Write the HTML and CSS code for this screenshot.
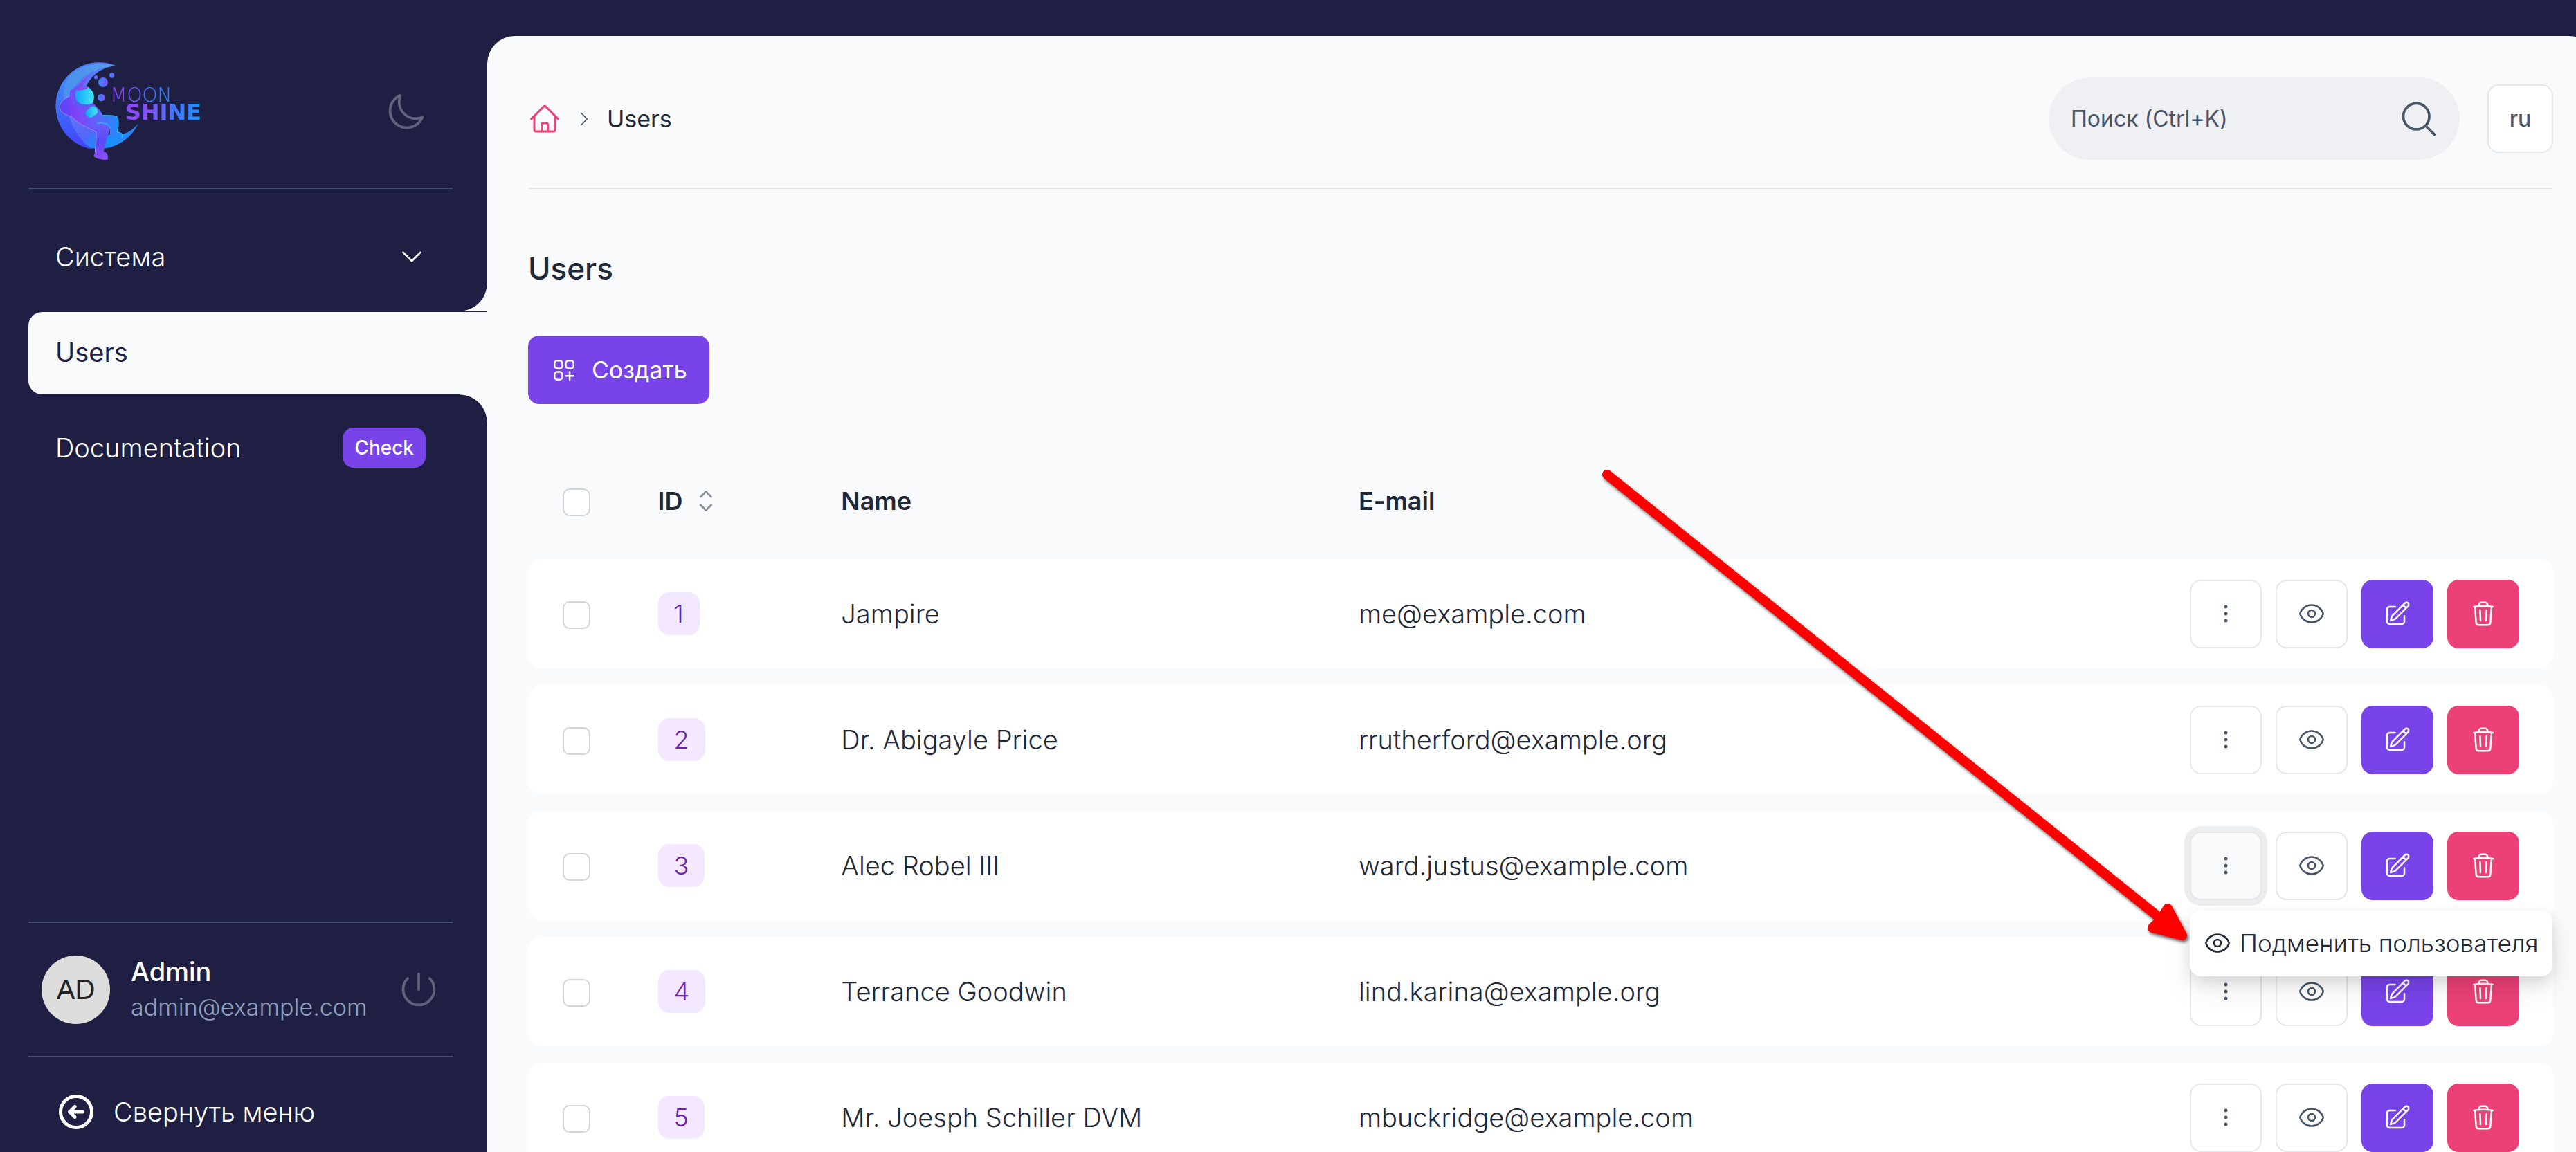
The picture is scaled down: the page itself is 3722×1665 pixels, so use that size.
FILE: index.html
```html
<!DOCTYPE html>
<html lang="ru">
<head>
<meta charset="utf-8">
<title>Users — MoonShine</title>
<meta name="viewport" content="width=device-width, initial-scale=1">
<link rel="stylesheet" href="styles.css">
</head>
<body>
<svg class="sprite" aria-hidden="true">
  <symbol id="i-moon" viewBox="0 0 24 24"><path d="M21.752 15.002A9.72 9.72 0 0 1 18 15.75c-5.385 0-9.75-4.365-9.75-9.75 0-1.33.266-2.597.748-3.752A9.753 9.753 0 0 0 3 11.25C3 16.635 7.365 21 12.75 21a9.753 9.753 0 0 0 9.002-5.998Z"/></symbol>
  <symbol id="i-down" viewBox="0 0 24 24"><path d="m19.5 8.25-7.5 7.5-7.5-7.5"/></symbol>
  <symbol id="i-right" viewBox="0 0 24 24"><path d="m8.25 4.5 7.5 7.5-7.5 7.5"/></symbol>
  <symbol id="i-power" viewBox="0 0 24 24"><path d="M5.636 5.636a9 9 0 1 0 12.728 0M12 3v9"/></symbol>
  <symbol id="i-back" viewBox="0 0 24 24"><circle cx="12" cy="12" r="9"/><path d="m11.25 9-3 3m0 0 3 3m-3-3h7.5"/></symbol>
  <symbol id="i-home" viewBox="0 0 24 24"><path d="m2.25 12 8.954-8.955c.44-.439 1.152-.439 1.591 0L21.75 12M4.5 9.75v10.125c0 .621.504 1.125 1.125 1.125H9.75v-4.875c0-.621.504-1.125 1.125-1.125h2.25c.621 0 1.125.504 1.125 1.125V21h4.125c.621 0 1.125-.504 1.125-1.125V9.75M8.25 21h8.25"/></symbol>
  <symbol id="i-search" viewBox="0 0 24 24"><path d="m21 21-5.197-5.197m0 0A7.5 7.5 0 1 0 5.196 5.196a7.5 7.5 0 0 0 10.607 10.607Z"/></symbol>
  <symbol id="i-add" viewBox="0 0 24 24"><path d="M13.5 16.875h3.375m0 0h3.375m-3.375 0V13.5m0 3.375v3.375M6 10.5h2.25a2.25 2.25 0 0 0 2.25-2.25V6a2.25 2.25 0 0 0-2.25-2.25H6A2.25 2.25 0 0 0 3.75 6v2.25A2.25 2.25 0 0 0 6 10.5Zm0 9.75h2.25A2.25 2.25 0 0 0 10.5 18v-2.25a2.25 2.25 0 0 0-2.25-2.25H6a2.25 2.25 0 0 0-2.25 2.25V18A2.25 2.25 0 0 0 6 20.25Zm9.75-9.75H18a2.25 2.25 0 0 0 2.25-2.25V6A2.25 2.25 0 0 0 18 3.75h-2.25A2.25 2.25 0 0 0 13.5 6v2.25a2.25 2.25 0 0 0 2.25 2.25Z"/></symbol>
  <symbol id="i-sort" viewBox="0 0 24 24"><path d="M8.25 15 12 18.75 15.75 15m-7.5-6L12 5.25 15.75 9"/></symbol>
  <symbol id="i-dots" viewBox="0 0 24 24"><g fill="currentColor" stroke="none"><circle cx="12" cy="6" r="1.5"/><circle cx="12" cy="12" r="1.5"/><circle cx="12" cy="18" r="1.5"/></g></symbol>
  <symbol id="i-eye" viewBox="0 0 24 24"><path d="M2.036 12.322a1.012 1.012 0 0 1 0-.639C3.423 7.51 7.36 4.5 12 4.5c4.638 0 8.573 3.007 9.963 7.178.07.207.07.431 0 .639C20.577 16.49 16.64 19.5 12 19.5c-4.638 0-8.573-3.007-9.963-7.178Z"/><path d="M15 12a3 3 0 1 1-6 0 3 3 0 0 1 6 0Z"/></symbol>
  <symbol id="i-edit" viewBox="0 0 24 24"><path d="m16.862 4.487 1.687-1.688a1.875 1.875 0 1 1 2.652 2.652L10.582 16.07a4.5 4.5 0 0 1-1.897 1.13L6 18l.8-2.685a4.5 4.5 0 0 1 1.13-1.897l8.932-8.931Zm0 0L19.5 7.125M18 14v4.75A2.25 2.25 0 0 1 15.75 21H5.25A2.25 2.25 0 0 1 3 18.75V8.25A2.25 2.25 0 0 1 5.25 6H10"/></symbol>
  <symbol id="i-trash" viewBox="0 0 24 24"><path d="m14.74 9-.346 9m-4.788 0L9.26 9m9.968-3.21c.342.052.682.107 1.022.166m-1.022-.165L18.16 19.673a2.25 2.25 0 0 1-2.244 2.077H8.084a2.25 2.25 0 0 1-2.244-2.077L4.772 5.79m14.456 0a48.108 48.108 0 0 0-3.478-.397m-12 .562c.34-.059.68-.114 1.022-.165m0 0a48.11 48.11 0 0 1 3.478-.397m7.5 0v-.916c0-1.18-.91-2.164-2.09-2.201a51.964 51.964 0 0 0-3.32 0c-1.18.037-2.09 1.022-2.09 2.201v.916m7.5 0a48.667 48.667 0 0 0-7.5 0"/></symbol>
</svg>

<div class="app">
  <aside class="sidebar">
    <div class="brand">
      <a href="#" aria-label="MoonShine">
        <svg class="logo" viewBox="60 66 681 420">
          <defs>
            <linearGradient id="g-moon" x1="0" y1="0" x2="1" y2="1"><stop offset="0" stop-color="#3b82f6"/><stop offset=".35" stop-color="#5b7af8"/><stop offset=".6" stop-color="#5865f9"/><stop offset=".75" stop-color="#0d96ff"/><stop offset="1" stop-color="#4a74f8"/></linearGradient>
            <linearGradient id="g-shade" x1="0" y1="0" x2="0" y2="1"><stop offset="0" stop-color="#3b8cf8"/><stop offset="1" stop-color="#4341fb"/></linearGradient>
            <linearGradient id="g-top" x1="0" y1="0" x2="1" y2="0"><stop offset="0" stop-color="#4a90f0"/><stop offset="1" stop-color="#55a0e8"/></linearGradient>
            <linearGradient id="g-body" x1="0" y1="0" x2="1" y2="0"><stop offset="0" stop-color="#5046fb"/><stop offset=".25" stop-color="#8140f8"/><stop offset=".6" stop-color="#5c66fa"/><stop offset="1" stop-color="#1492ff"/></linearGradient>
            <linearGradient id="g-leg" x1="0" y1="0" x2="0" y2="1"><stop offset="0" stop-color="#6a5cf8"/><stop offset=".5" stop-color="#5a48fa"/><stop offset="1" stop-color="#9050f6"/></linearGradient>
            <linearGradient id="g-visor" x1="0" y1="0" x2="1" y2="0"><stop offset="0" stop-color="#12a5fb"/><stop offset="1" stop-color="#45e6ee"/></linearGradient>
            <linearGradient id="g-dot" x1="0" y1="0" x2="1" y2="0"><stop offset="0" stop-color="#2f8bff"/><stop offset="1" stop-color="#8050f5"/></linearGradient>
            <linearGradient id="g-word" x1="0" y1="0" x2="1" y2="0"><stop offset="0" stop-color="#9048f5"/><stop offset=".3" stop-color="#8350f5"/><stop offset=".7" stop-color="#3b7bfd"/><stop offset="1" stop-color="#1a90ff"/></linearGradient>
          </defs>
          <path fill="url(#g-moon)" d="M322 76A187 187 0 1 0 420 323C370 395 260 395 205 320C140 225 200 85 322 76Z"/>
          <path fill="url(#g-shade)" d="M108 130A187 187 0 0 0 225 438C150 400 85 270 108 130Z"/>
          <path fill="url(#g-top)" d="M322 76C250 56 160 70 112 130C95 160 92 200 100 235L135 180C170 115 240 82 322 76Z"/>
          <path fill="#8a48f4" d="M225 103C195 125 170 140 155 170L180 158C192 137 205 117 225 103Z"/>
          <path fill="url(#g-body)" d="M125 206C60 235 65 280 132 298C160 330 205 350 238 360C262 325 290 335 296 350C298 370 290 385 300 388L345 388C358 375 350 364 328 362C336 340 334 305 325 294C300 290 280 292 266 290C255 265 240 255 228 242L150 170C125 175 118 190 125 206Z"/>
          <path fill="url(#g-leg)" d="M215 345C240 320 290 325 296 345C290 380 275 410 270 448C285 452 290 460 287 482C265 484 235 480 226 466L232 450C232 420 240 385 238 362Z"/>
          <path fill="none" stroke="#a884fa" stroke-width="3" d="M122 207C60 235 65 280 134 298C160 330 205 345 236 362C242 380 232 420 232 452"/>
          <path fill="none" stroke="#2bd0f8" stroke-width="3" d="M240 325C270 318 295 330 297 345M266 290C300 290 325 290 330 300C336 325 332 345 328 362C350 364 358 378 345 389"/>
          <circle cx="174" cy="208" r="49" fill="#6255f8"/>
          <path fill="#7c4cf6" d="M140 172A49 49 0 0 0 150 250C135 225 132 195 140 172Z"/>
          <path fill="url(#g-visor)" d="M148 182C170 182 190 178 203 168C228 185 235 215 220 237C195 250 160 245 150 220C146 208 146 195 148 182Z"/>
          <path fill="#9048f5" d="M150 180C160 163 190 162 203 168C190 180 170 184 150 180Z"/>
          <path fill="url(#g-visor)" d="M212 254C222 248 232 252 240 262C244 272 244 278 238 284L215 300C205 302 195 292 191 282C190 276 194 270 198 267Z"/>
          <g fill="url(#g-dot)"><circle cx="236" cy="125" r="8"/><circle cx="267" cy="147" r="21"/><circle cx="305" cy="117" r="11"/><circle cx="259" cy="213" r="16"/></g>
          <g class="wordmark" fill="url(#g-word)"><text x="298" y="231" font-size="84">MOON</text><text x="362" y="310" font-size="96" font-weight="700">SHINE</text></g>
        </svg>
      </a>
      <button class="plain muted" type="button" aria-label="Тема"><svg class="icon xl"><use href="#i-moon"/></svg></button>
    </div>

    <nav class="menu">
      <button class="plain item" type="button"><span>Система</span><svg class="icon md"><use href="#i-down"/></svg></button>
      <a class="item active" href="#">Users</a>
      <a class="item" href="#"><span>Documentation</span><span class="tag">Check</span></a>
    </nav>

    <div class="profile">
      <span class="avatar">AD</span>
      <div class="who"><span class="who-name">Admin</span><span class="who-mail">admin@example.com</span></div>
      <button class="plain muted" type="button" aria-label="Выход"><svg class="icon xl"><use href="#i-power"/></svg></button>
    </div>
    <button class="plain collapse" type="button"><svg class="icon xl bold"><use href="#i-back"/></svg><span>Свернуть меню</span></button>
  </aside>

  <main class="page">
    <header class="topbar">
      <nav class="crumbs" aria-label="Навигация">
        <a class="home" href="#" aria-label="Главная"><svg class="icon lg"><use href="#i-home"/></svg></a>
        <svg class="icon xs"><use href="#i-right"/></svg>
        <span>Users</span>
      </nav>
      <div class="tools">
        <form class="search">
          <input type="search" placeholder="Поиск (Ctrl+K)" aria-label="Поиск">
          <button class="plain" type="button" aria-label="Найти"><svg class="icon xl"><use href="#i-search"/></svg></button>
        </form>
        <button class="btn lang" type="button">ru</button>
      </div>
    </header>

    <h1>Users</h1>
    <a class="btn primary create" href="#"><svg class="icon md"><use href="#i-add"/></svg>Создать</a>

    <table class="grid">
      <colgroup><col class="c-check"><col class="c-id"><col class="c-name"><col></colgroup>
      <thead>
        <tr>
          <th class="check"><input type="checkbox" aria-label="Выбрать все"></th>
          <th><a class="sort" href="#">ID<svg class="icon lg"><use href="#i-sort"/></svg></a></th>
          <th>Name</th>
          <th>E-mail</th>
          <th class="c-act"></th>
        </tr>
      </thead>
      <tbody>
        <tr>
          <td class="check"><input type="checkbox" aria-label="1"></td>
          <td><span class="badge">1</span></td><td>Jampire</td><td>me@example.com</td>
          <td><div class="actions">
            <button class="btn" type="button" aria-label="Ещё"><svg class="icon md"><use href="#i-dots"/></svg></button>
            <a class="btn" href="#" aria-label="Просмотр"><svg class="icon md"><use href="#i-eye"/></svg></a>
            <a class="btn primary" href="#" aria-label="Изменить"><svg class="icon md"><use href="#i-edit"/></svg></a>
            <button class="btn danger" type="button" aria-label="Удалить"><svg class="icon md"><use href="#i-trash"/></svg></button>
          </div></td>
        </tr>
        <tr>
          <td class="check"><input type="checkbox" aria-label="2"></td>
          <td><span class="badge">2</span></td><td>Dr. Abigayle Price</td><td>rrutherford@example.org</td>
          <td><div class="actions">
            <button class="btn" type="button" aria-label="Ещё"><svg class="icon md"><use href="#i-dots"/></svg></button>
            <a class="btn" href="#" aria-label="Просмотр"><svg class="icon md"><use href="#i-eye"/></svg></a>
            <a class="btn primary" href="#" aria-label="Изменить"><svg class="icon md"><use href="#i-edit"/></svg></a>
            <button class="btn danger" type="button" aria-label="Удалить"><svg class="icon md"><use href="#i-trash"/></svg></button>
          </div></td>
        </tr>
        <tr>
          <td class="check"><input type="checkbox" aria-label="3"></td>
          <td><span class="badge">3</span></td><td>Alec Robel III</td><td>ward.justus@example.com</td>
          <td><div class="actions">
            <div class="dropdown">
              <button class="btn open" type="button" aria-label="Ещё" aria-expanded="true"><svg class="icon md"><use href="#i-dots"/></svg></button>
              <div class="dropdown-body"><a href="#"><svg class="icon md"><use href="#i-eye"/></svg>Подменить пользователя</a></div>
            </div>
            <a class="btn" href="#" aria-label="Просмотр"><svg class="icon md"><use href="#i-eye"/></svg></a>
            <a class="btn primary" href="#" aria-label="Изменить"><svg class="icon md"><use href="#i-edit"/></svg></a>
            <button class="btn danger" type="button" aria-label="Удалить"><svg class="icon md"><use href="#i-trash"/></svg></button>
          </div></td>
        </tr>
        <tr>
          <td class="check"><input type="checkbox" aria-label="4"></td>
          <td><span class="badge">4</span></td><td>Terrance Goodwin</td><td>lind.karina@example.org</td>
          <td><div class="actions">
            <button class="btn" type="button" aria-label="Ещё"><svg class="icon md"><use href="#i-dots"/></svg></button>
            <a class="btn" href="#" aria-label="Просмотр"><svg class="icon md"><use href="#i-eye"/></svg></a>
            <a class="btn primary" href="#" aria-label="Изменить"><svg class="icon md"><use href="#i-edit"/></svg></a>
            <button class="btn danger" type="button" aria-label="Удалить"><svg class="icon md"><use href="#i-trash"/></svg></button>
          </div></td>
        </tr>
        <tr>
          <td class="check"><input type="checkbox" aria-label="5"></td>
          <td><span class="badge">5</span></td><td>Mr. Joesph Schiller DVM</td><td>mbuckridge@example.com</td>
          <td><div class="actions">
            <button class="btn" type="button" aria-label="Ещё"><svg class="icon md"><use href="#i-dots"/></svg></button>
            <a class="btn" href="#" aria-label="Просмотр"><svg class="icon md"><use href="#i-eye"/></svg></a>
            <a class="btn primary" href="#" aria-label="Изменить"><svg class="icon md"><use href="#i-edit"/></svg></a>
            <button class="btn danger" type="button" aria-label="Удалить"><svg class="icon md"><use href="#i-trash"/></svg></button>
          </div></td>
        </tr>
      </tbody>
    </table>
  </main>

  <svg class="pointer" viewBox="2300 670 880 710" aria-hidden="true">
    <path d="M2322 686 3126 1331"/>
    <path class="head" d="M3132 1313 3153 1352 3110 1341 3122 1329Z"/>
  </svg>
</div>
</body>
</html>
```
FILE: styles.css
```css
:root {
  --dark: #1e1f43;
  --body: #f9fafc;
  --text: #1f2937;
  --slate: #475569;
  --line: #e5e7eb;
  --primary: #7843e9;
  --danger: #ec4176;
}

* { box-sizing: border-box; }

body {
  margin: 0;
  background: var(--dark);
  color: var(--text);
  font-family: Inter, "Noto Sans", sans-serif;
  font-size: 38px;
  font-weight: 300;
  line-height: 48px;
}

a { color: inherit; text-decoration: none; }

.sprite { position: absolute; width: 0; height: 0; }

.plain {
  padding: 0;
  border: 0;
  background: none;
  color: inherit;
  font: inherit;
  text-align: left;
}

.icon {
  display: block;
  flex: none;
  fill: none;
  stroke: currentColor;
  stroke-width: 1.5;
  stroke-linecap: round;
  stroke-linejoin: round;
}
.icon.xs { width: 28px; height: 28px; }
.icon.md { width: 40px; height: 40px; }
.icon.lg { width: 48px; height: 48px; }
.icon.xl { width: 60px; height: 60px; }
.icon.bold { stroke-width: 2; }

.app {
  position: relative;
  display: flex;
  height: 100vh;
  overflow: hidden;
}

/* Sidebar */
.sidebar {
  display: flex;
  flex: none;
  flex-direction: column;
  width: 704px;
  padding: 0 50px 0 41px;
  color: #fff;
}

.brand {
  display: flex;
  justify-content: space-between;
  padding: 92px 38px 39px 39px;
  border-bottom: 2px solid #44506f;
}
.logo { display: block; width: 227px; height: 140px; overflow: visible; }
.wordmark { font-family: "DejaVu Sans", sans-serif; }
.brand .muted { align-self: center; }
.muted { color: #63617b; }

.menu {
  display: flex;
  flex: 1;
  flex-direction: column;
  gap: 19px;
  padding-top: 40px;
}
.item {
  display: flex;
  align-items: center;
  justify-content: space-between;
  height: 119px;
  padding: 0 39px 4px;
}
.active {
  position: relative;
  margin-right: -50px;
  border-radius: 20px 0 0 20px;
  background: var(--body);
  color: var(--dark);
  font-weight: 400;
}
.active::before,
.active::after {
  content: "";
  position: absolute;
  right: 0;
  width: 40px;
  height: 40px;
}
.active::before {
  bottom: calc(100% + 1px);
  background: radial-gradient(circle at 0 0, transparent 39px, var(--body) 40px);
}
.active::after {
  top: 100%;
  background: radial-gradient(circle at 0 100%, transparent 39px, var(--body) 40px);
}
.tag {
  padding: 5px 17px;
  border-radius: 16px;
  background: var(--primary);
  font-size: 28px;
  font-weight: 500;
}

.profile {
  display: flex;
  align-items: center;
  gap: 30px;
  padding: 46px 19px;
  border: solid #44506f;
  border-width: 2px 0;
}
.avatar {
  flex: none;
  width: 99px;
  border-radius: 50%;
  background: #ddd;
  color: #222;
  font-family: "Liberation Sans", sans-serif;
  font-size: 40px;
  font-weight: 400;
  line-height: 99px;
  text-align: center;
}
.who { display: flex; flex: 1; flex-direction: column; gap: 4px; }
.who-name { font-weight: 500; }
.who-mail { color: #8f9fba; font-size: 34px; }

.collapse {
  display: flex;
  align-items: center;
  gap: 24px;
  height: 137px;
  padding: 20px 39px 0;
}

/* Page */
.page {
  flex: 1;
  min-width: 0;
  margin-top: 52px;
  padding: 0 33px 0 59px;
  overflow: hidden;
  border-radius: 40px 12px 0 0 / 40px 2px 0 0;
  background: var(--body);
}

.topbar {
  display: flex;
  align-items: center;
  justify-content: space-between;
  padding: 60px 0 40px;
  border-bottom: 2px solid var(--line);
}
.crumbs { display: flex; align-items: center; gap: 19px; font-size: 34px; font-weight: 400; }
.crumbs .xs { color: var(--slate); }
.home { color: var(--danger); }
.tools { display: flex; align-items: center; gap: 40px; }

.search {
  display: flex;
  align-items: center;
  width: 594px;
  height: 119px;
  padding: 0 29px 0 32px;
  border-radius: 60px;
  background: #eff0f4;
  color: var(--slate);
}
.search input {
  flex: 1;
  min-width: 0;
  padding: 0;
  border: 0;
  outline: 0;
  background: none;
  color: inherit;
  font: inherit;
  font-size: 32px;
  font-weight: 400;
}
.search input::placeholder { color: inherit; opacity: 1; }

.btn {
  display: inline-flex;
  align-items: center;
  justify-content: center;
  width: 104px;
  height: 99px;
  padding: 0;
  border: 2px solid var(--line);
  border-radius: 16px;
  background: #fff;
  color: var(--slate);
  font: inherit;
  font-size: 34px;
}
.primary { border-color: var(--primary); background: var(--primary); color: #fff; }
.danger { border-color: var(--danger); background: var(--danger); color: #fff; }
.lang { width: 95px; font-weight: 500; font-size: 32px; }

h1 {
  margin: 85px 0 67px;
  font-size: 44px;
  font-weight: 500;
  line-height: 60px;
}
.create { display: flex; gap: 20px; width: fit-content; padding: 0 30px; font-weight: 400; }

/* Users table */
.grid {
  width: 100%;
  margin-top: 56px;
  border-collapse: separate;
  border-spacing: 0 24px;
  table-layout: fixed;
}
.c-check { width: 4.7%; }
.c-id { width: 9.05%; }
.c-name { width: 25.55%; }
th, td { padding: 0 0 0 50px; text-align: left; white-space: nowrap; }
th { height: 120px; font-size: 36px; font-weight: 600; }
td { height: 158px; background: #fff; }
td:first-child { border-radius: 20px 0 0 20px; }
td:last-child { padding-right: 49px; border-radius: 0 20px 20px 0; }
.check { padding-top: 4px; }
.check input {
  display: block;
  width: 40px;
  height: 40px;
  margin: 0;
  appearance: none;
  border: 2px solid #d1d5db;
  border-radius: 10px;
  background: #fff;
}
.sort { display: flex; align-items: center; gap: 10px; }
.sort .icon { color: #8b929b; }
.badge {
  display: inline-block;
  padding: 7px 23px;
  border-radius: 16px;
  background: #f3e8ff;
  color: #6b21a8;
  font-size: 36px;
}

.actions { display: flex; justify-content: flex-end; gap: 20px; }
.dropdown { position: relative; }
.open { background: var(--body); box-shadow: 0 0 0 8px #ebedef; }
.dropdown-body {
  position: absolute;
  z-index: 2;
  top: 114px;
  left: 0;
  border-radius: 16px;
  background: #fff;
  box-shadow: 0 20px 40px rgba(0, 0, 0, .08), 0 8px 20px rgba(0, 0, 0, .1);
}
.dropdown-body a {
  display: flex;
  align-items: center;
  gap: 12px;
  height: 95px;
  padding: 0 20px;
  font-size: 35px;
}

/* Arrow laid over the page */
.pointer {
  position: absolute;
  z-index: 3;
  top: 670px;
  right: 542px;
  width: 880px;
  height: 710px;
  fill: none;
  stroke: #f00;
  stroke-width: 14;
  stroke-linecap: round;
  stroke-linejoin: round;
  filter: drop-shadow(2px 3px 2px rgba(0, 0, 0, .6));
  pointer-events: none;
}
.pointer .head { fill: #f00; }
```
